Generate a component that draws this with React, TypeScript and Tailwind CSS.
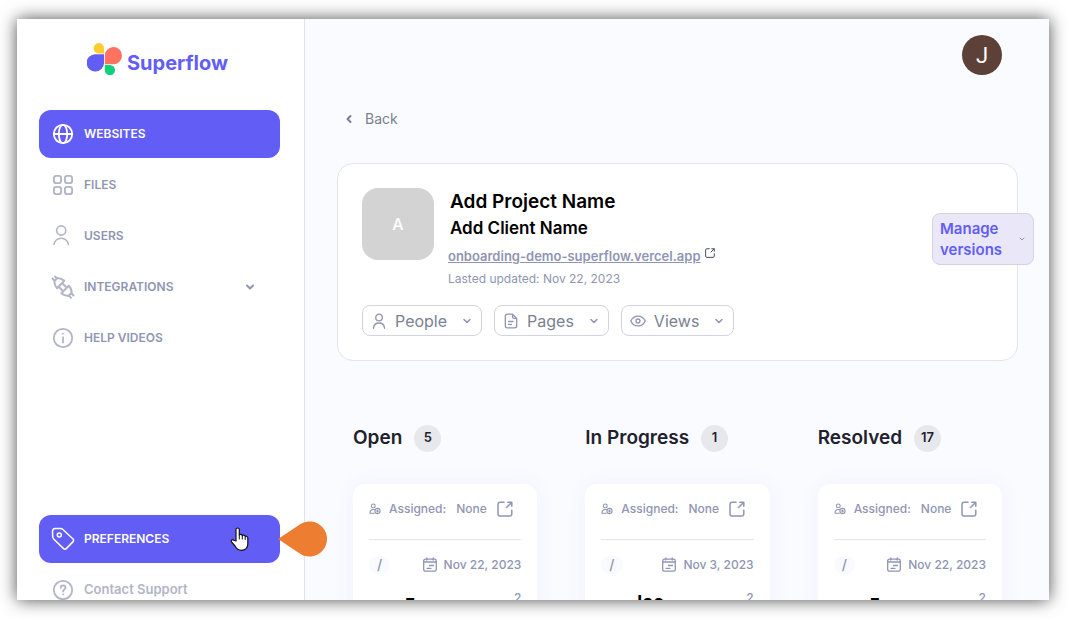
import { ChevronDown, ChevronLeft } from "lucide-react"
import type { ReactNode } from "react"

const navItems = [
  { label: "WEBSITES", icon: GlobeIcon, active: true, expandable: false },
  { label: "FILES", icon: GridIcon, active: false, expandable: false },
  { label: "USERS", icon: UserIcon, active: false, expandable: false },
  { label: "INTEGRATIONS", icon: PlugIcon, active: false, expandable: true },
  { label: "HELP VIDEOS", icon: InfoIcon, active: false, expandable: false }
]

const filters = [
  { label: "People", icon: PersonIcon },
  { label: "Pages", icon: PageIcon },
  { label: "Views", icon: EyeIcon }
]

const columns = [
  { title: "Open", count: 5, date: "Nov 22, 2023", note: "z" },
  { title: "In Progress", count: 1, date: "Nov 3, 2023", note: "loc" },
  { title: "Resolved", count: 17, date: "Nov 22, 2023", note: "z" }
]

function Svg({ size, box, width = 1.5, children }: { size: string; box: string; width?: number; children: ReactNode }) {
  return (
    <svg className={`${size} shrink-0`} viewBox={box} fill="none" stroke="currentColor" strokeWidth={width} strokeLinecap="round" strokeLinejoin="round" aria-hidden="true">
      {children}
    </svg>
  )
}

function GlobeIcon() {
  return (
    <Svg size="h-6 w-6" box="0 0 24 24" width={1.8}>
      <circle cx="12" cy="12" r="9.2" />
      <ellipse cx="12" cy="12" rx="4.2" ry="9.2" />
      <path d="M2.8 12h18.4" />
    </Svg>
  )
}

function GridIcon() {
  return (
    <Svg size="h-6 w-6" box="0 0 24 24" width={1.9}>
      <rect x="2.9" y="2.9" width="7.2" height="7.2" rx="2.4" />
      <rect x="13.9" y="2.9" width="7.2" height="7.2" rx="2.4" />
      <rect x="2.9" y="13.9" width="7.2" height="7.2" rx="2.4" />
      <rect x="13.9" y="13.9" width="7.2" height="7.2" rx="2.4" />
    </Svg>
  )
}

function UserIcon() {
  return (
    <Svg size="h-6 w-6" box="0 0 24 24" width={1.6}>
      <circle cx="10.2" cy="6.5" r="4.6" />
      <path d="M3 20.500c.4-3.600 3.500-6.300 7.200-6.300s6.800 2.700 7.200 6.300" />
    </Svg>
  )
}

function PlugIcon() {
  return (
    <Svg size="h-6 w-6" box="0 0 24 24" width={2}>
      <path d="M1.500 3.500 3.600 5.800M4 1.500l2 2M3.300 6.300 6.300 3c2.800.2 5 .8 7 2.700L6 13.200C4.200 11.300 3.300 9.200 3.300 6.300z" />
      <path d="M8.500 12.500l2.500 2.500M12 9l2.500 2.500M20.700 17.700l-3.300 3.300c-2.800-.2-5-.8-7-2.700L17.700 10.800c1.900 1.900 3 4 3 6.900zM22.500 20.500 20.300 18.300M20 22.800l-2-2.200" />
    </Svg>
  )
}

function InfoIcon() {
  return (
    <Svg size="h-6 w-6" box="0 0 24 24" width={1.800}>
      <circle cx="12" cy="12" r="9.200" />
      <path d="M12 11.200v5.300M12 7.600v.1" />
    </Svg>
  )
}

function TagIcon() {
  return (
    <Svg size="h-6 w-6" box="0 0 24 24">
      <path d="M1.500 4.500c0-1.800 1-2.800 2.800-2.900l5.200-.1c1 0 1.700.3 2.400 1l9.900 9.200c1.100 1.100 1.100 2.100.1 3.200l-6.400 6.500c-1 1-2.200 1-3.200 0L2.700 12c-.7-.7-1-1.500-1-2.400z" />
      <circle cx="8.300" cy="8" r="2" />
    </Svg>
  )
}

function QuestionIcon() {
  return (
    <Svg size="h-6 w-6" box="0 0 24 24" width={1.800}>
      <circle cx="12" cy="12" r="9.200" />
      <path d="M9.700 9.800c0-1.400 1-2.300 2.400-2.300s2.400.9 2.400 2.200c0 1.700-2.400 1.900-2.400 3.800M12.100 16.300v.1" />
    </Svg>
  )
}

function PersonIcon() {
  return (
    <Svg size="h-4 w-4" box="0 0 16 16" width={1.300}>
      <circle cx="8" cy="4.500" r="3.300" />
      <path d="M2.500 15.300c.2-3.200 2.400-5.300 5.500-5.300s5.300 2.100 5.500 5.300" />
    </Svg>
  )
}

function PageIcon() {
  return (
    <Svg size="h-4 w-4" box="0 0 16 16" width={1.300}>
      <path d="M9.500 1.200H4.400c-1.200 0-2.100.9-2.100 2.100v9.400c0 1.200.9 2.100 2.100 2.100h7.200c1.200 0 2.100-.9 2.100-2.100V5.400zM9.500 1.200v2.600c0 1 .6 1.600 1.600 1.600h2.600M5.500 8.500h4.500M5.500 11.300h3" />
    </Svg>
  )
}

function EyeIcon() {
  return (
    <Svg size="h-4 w-4" box="0 0 16 16" width={1.300}>
      <path d="M.8 8C2.200 5 5 3.100 8 3.100S13.800 5 15.200 8c-1.400 3-4.200 4.900-7.200 4.900S2.200 11 .8 8z" />
      <circle cx="8" cy="8" r="2" />
    </Svg>
  )
}

function OpenIcon({ size }: { size: string }) {
  return (
    <Svg size={size} box="0 0 16 16" width={1.500}>
      <path d="M7 1.200H3C1.800 1.200 1 2 1 3.200V13c0 1.200.8 2 2 2h9.800c1.200 0 2-.8 2-2V9.200M10.800 1.200h4v4M14.500 1.500 9.500 6.500" />
    </Svg>
  )
}

function CalendarIcon() {
  return (
    <Svg size="h-4 w-4" box="0 0 16 16" width={1.300}>
      <rect x="1.700" y="2.200" width="12.600" height="12" rx="1.800" />
      <path d="M4.800 1v2M11.200 1v2M1.700 5h12.600M7.500 8.500h4M5 11.300h4" />
    </Svg>
  )
}

function AssignIcon() {
  return (
    <Svg size="h-3 w-3" box="0 0 12 12" width={1.100}>
      <circle cx="4.300" cy="2.900" r="1.900" />
      <path d="M5.500 6.600C3 6 1 7.200 1 10.200h4.300" />
      <circle cx="8.500" cy="8" r="2.600" />
      <path d="M8.500 7v2M7.500 8h2" />
    </Svg>
  )
}

function Logo() {
  return (
    <a href="#" className="flex items-center gap-1 pl-12 text-[#625df5]">
      <svg className="h-8 w-9" viewBox="0.5 0 36 32" aria-hidden="true">
        <path fill="#ffcb2d" d="M17.500 10.500h-5a5.200 5.200 0 1 1 5-5.200z" />
        <path fill="#625df5" d="M17.500 11.200v8.300a8.700 8.700 0 1 1-8.700-8.300z" />
        <path fill="#ff7262" d="M18.300 21.300v-8.500a8.600 8.600 0 1 1 8.600 8.500z" />
        <path fill="#0fd07d" d="M18.300 22h5.200a5.100 5.100 0 1 1-5.200 5.200z" />
      </svg>
      <span className="pt-2 text-xl leading-6 font-bold">Superflow</span>
    </a>
  )
}

function TaskColumn({ title, count, date, note }: (typeof columns)[number]) {
  return (
    <section className="min-w-0">
      <div className="flex h-7 items-center gap-3">
        <h2 className="text-[19px] leading-6 font-semibold whitespace-nowrap text-[#1f222e]">{title}</h2>
        <span className="flex h-[27px] w-[27px] items-center justify-center rounded-full bg-[#e7e8ec] text-[13px] font-semibold text-[#1f222e]">{count}</span>
      </div>
      <article className="mt-8 rounded-xl bg-white p-4 text-xs font-medium text-[#8f95b2] shadow-[0_0_20px_rgba(98,93,245,0.06)]">
        <div className="flex h-10 items-start border-b border-[#e4e5e9]">
          <div className="flex h-[18px] items-center whitespace-nowrap">
            <AssignIcon />
            <span className="ml-2">Assigned:</span>
            <span className="mx-2.5">None</span>
            <button type="button" aria-label="Open task">
              <OpenIcon size="h-4 w-4" />
            </button>
          </div>
        </div>
        <div className="mt-4 flex h-[18px] items-center justify-between">
          <span className="rounded-full bg-[#f9faff] px-2 text-sm leading-[18px]">/</span>
          <span className="flex items-center gap-1.5 whitespace-nowrap">
            <CalendarIcon />
            {date}
          </span>
        </div>
        <div className="mt-4 flex justify-between">
          <p className="pl-9 text-lg leading-6 font-bold text-black">{note}</p>
          <span>2</span>
        </div>
      </article>
    </section>
  )
}

export default function App() {
  return (
    <div className="h-screen bg-white pt-[19px] pr-5 pb-5 pl-[17px] font-['Inter',sans-serif]">
      <div className="relative flex h-full shadow-[0_0_16px_rgba(0,0,0,0.7)]">
        <aside className="flex w-72 shrink-0 flex-col overflow-hidden border-r border-[#e0e3ed] bg-white pr-6 pl-[22px] text-xs font-semibold text-[#8f95b2]">
          <div className="pt-6 pb-[35px]">
            <Logo />
          </div>
          <nav className="flex flex-col gap-[3px]">
            {navItems.map((item) => {
              const Icon = item.icon
              return (
                <a key={item.label} href="#" className={item.active ? "flex h-12 items-center rounded-xl bg-[#625df5] px-3 text-white" : "flex h-12 items-center px-3"}>
                  <span className={item.active ? "" : "text-[#b2b5c7]"}>
                    <Icon />
                  </span>
                  <span className="ml-[9px] flex-1">{item.label}</span>
                  {item.expandable && <ChevronDown className="mr-3 h-3 w-3" strokeWidth={4} />}
                </a>
              )
            })}
          </nav>
          <div className="mt-auto h-[85px] shrink-0">
            <a href="#" className="flex h-12 items-center rounded-xl bg-[#625df5] px-3 text-white">
              <TagIcon />
              <span className="ml-[9px]">PREFERENCES</span>
            </a>
            <a href="#" className="mt-[3px] flex h-12 items-center px-3 text-[13px] text-[#b2b5c7]">
              <QuestionIcon />
              <span className="ml-[9px]">Contact Support</span>
            </a>
          </div>
        </aside>

        <main className="min-w-0 flex-1 overflow-hidden bg-[#fafbff] pr-[31px] pl-8">
          <header className="flex justify-end pt-4 pr-4">
            <button type="button" className="h-10 w-10 rounded-full bg-[#5d4037] font-['Roboto',sans-serif] text-[22px] text-white">J</button>
          </header>
          <a href="#" className="mt-8 flex w-fit items-center gap-2.5 pl-1.5 text-sm leading-6 text-[#7b7f92]">
            <ChevronLeft className="h-3 w-3" strokeWidth={4} />
            Back
          </a>

          <section className="relative mt-8 rounded-2xl border border-[#e3e5ed] bg-white p-6">
            <div className="flex gap-3.5">
              <div className="flex h-[72px] w-[72px] items-center justify-center rounded-2xl bg-[#d3d3d3] text-base font-medium text-white">A</div>
              <div className="text-xs text-[#8f95b2]">
                <h1 className="pl-0.5 text-[19px] leading-7 font-semibold text-black">Add Project Name</h1>
                <p className="pl-0.5 text-[17px] leading-6 font-semibold text-black">Add Client Name</p>
                <p className="mt-1 flex gap-1 text-[13px] leading-6">
                  <a href="#" className="font-semibold underline">onboarding-demo-superflow.vercel.app</a>
                  <span className="pt-1 text-[#3f4254]">
                    <OpenIcon size="h-2.5 w-2.5" />
                  </span>
                </p>
                <p className="leading-[22px]">Lasted updated: Nov 22, 2023</p>
              </div>
            </div>
            <div className="mt-[15px] flex gap-3">
              {filters.map((filter) => {
                const Icon = filter.icon
                return (
                  <button key={filter.label} type="button" className="flex h-[31px] items-center rounded-lg border border-[#d3d4e0] px-2 text-base text-[#8f95b2]">
                    <Icon />
                    <span className="mr-3.5 ml-2 text-[#7b7f92]">{filter.label}</span>
                    <ChevronDown className="h-3 w-3" strokeWidth={3} />
                  </button>
                )
              })}
            </div>
            {/* hangs over the right edge of the card */}
            <button type="button" className="absolute top-[49px] -right-[17px] flex w-[102px] items-center justify-between rounded-lg border border-[#d3d4e0] bg-[#eae7f9] px-[7px] py-1 text-left text-[15px] leading-[21px] font-semibold text-[#625df5]">
              <span>
                Manage
                <br />
                versions
              </span>
              <ChevronDown className="h-2 w-2 text-[#8f95b2]" strokeWidth={3} />
            </button>
          </section>

          <div className="mt-[63px] grid grid-cols-3 gap-12 px-4">
            {columns.map((column) => (
              <TaskColumn key={column.title} {...column} />
            ))}
          </div>
        </main>

        {/* callout marker and pointer beside Preferences */}
        <svg className="absolute bottom-[43px] left-[261px] h-9 w-[50px]" viewBox="0 0 50 36" aria-hidden="true">
          <path fill="#ed7d31" d="M0 18 21 4a17.500 17.500 0 1 1 0 28z" />
        </svg>
        <svg className="absolute bottom-[49px] left-[213px] h-6 w-5" viewBox="0 0 20 24" aria-hidden="true">
          <path fill="#fff" stroke="#111" strokeWidth="1.200" strokeLinejoin="round" d="M6 14V2.500C6 .5 9.300.5 9.300 2.500V8c.6-1 2.700-.8 3 .6.800-.8 2.600-.4 2.900.8 1-.5 2.600 0 2.600 1.700V17c0 3.500-2.500 6.300-6.500 6.300-3.800 0-5-1.900-6.300-4.300L1.500 14.800c-.9-1.700 1-2.700 2.300-1.500z" />
          <path stroke="#111" strokeWidth="1" strokeLinecap="round" d="M9.300 8v4M12.300 9v3M15.200 10v2.500" />
        </svg>
      </div>
    </div>
  )
}
